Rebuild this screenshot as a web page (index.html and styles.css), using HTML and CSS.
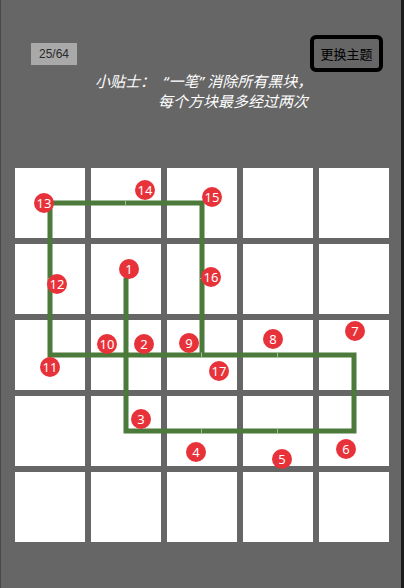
FILE: index.html
```html
<!DOCTYPE html>
<html lang="zh-CN">
<head>
<meta charset="utf-8">
<title>一笔</title>
<link rel="stylesheet" href="styles.css">
</head>
<body>
<div class="app">
  <div class="header">
    <div class="counter">25/64</div>
    <button class="theme-btn">更换主题</button>
  </div>
  <div class="tip">
    <div class="tip-line first">小贴士：<span class="q open">“</span>一笔<span class="q close">”</span> 消除所有黑块，</div>
    <div class="tip-line second">每个方块最多经过两次</div>
  </div>
  <div class="board">
    <div class="grid">
      <div class="cell"></div><div class="cell"></div><div class="cell"></div><div class="cell"></div><div class="cell"></div>
      <div class="cell"></div><div class="cell"></div><div class="cell"></div><div class="cell"></div><div class="cell"></div>
      <div class="cell"></div><div class="cell"></div><div class="cell"></div><div class="cell"></div><div class="cell"></div>
      <div class="cell"></div><div class="cell"></div><div class="cell"></div><div class="cell"></div><div class="cell"></div>
      <div class="cell"></div><div class="cell"></div><div class="cell"></div><div class="cell"></div><div class="cell"></div>
    </div>
    <svg class="path" width="374" height="374" viewBox="0 0 374 374">
      <polyline points="111,112 111,263 339,263 339,187 35,187 35,35 187,35 187,187" fill="none" stroke="#4b7a3b" stroke-width="5" stroke-linejoin="miter" stroke-linecap="square"/>
      <g stroke="#9fbf92" stroke-width="1">
        <line x1="110.5" y1="32.5" x2="110.5" y2="37.5"/>
        <line x1="32.5" y1="110.5" x2="37.5" y2="110.5"/>
        <line x1="184.5" y1="110.5" x2="189.5" y2="110.5"/>
        <line x1="186.5" y1="184.5" x2="186.5" y2="189.5"/>
        <line x1="262.5" y1="184.5" x2="262.5" y2="189.5"/>
        <line x1="186.5" y1="260.5" x2="186.5" y2="265.5"/>
        <line x1="262.5" y1="260.5" x2="262.5" y2="265.5"/>
      </g>
    </svg>
    <span class="dot" style="left:104px;top:91px">1</span>
    <span class="dot" style="left:119px;top:166px">2</span>
    <span class="dot" style="left:116px;top:241px">3</span>
    <span class="dot" style="left:171px;top:274px">4</span>
    <span class="dot" style="left:257px;top:281px">5</span>
    <span class="dot" style="left:321px;top:271px">6</span>
    <span class="dot" style="left:330px;top:153px">7</span>
    <span class="dot" style="left:248px;top:161px">8</span>
    <span class="dot" style="left:164px;top:165px">9</span>
    <span class="dot" style="left:82px;top:166px">10</span>
    <span class="dot" style="left:25px;top:189px">11</span>
    <span class="dot" style="left:32px;top:106px">12</span>
    <span class="dot" style="left:19px;top:25px">13</span>
    <span class="dot" style="left:120px;top:12px">14</span>
    <span class="dot" style="left:187px;top:19px">15</span>
    <span class="dot" style="left:186px;top:99px">16</span>
    <span class="dot" style="left:194px;top:193px">17</span>
  </div>
</div>
</body>
</html>
```

FILE: styles.css
```css
html, body {
  margin: 0;
  padding: 0;
  background: #1c1c1c;
}
.app {
  box-sizing: border-box;
  width: 404px;
  height: 588px;
  background: #666666;
  border-left: 1px solid #484848;
  border-right: 3px solid #1c1c1c;
  padding-top: 35px;
  overflow: hidden;
  font-family: "Noto Sans", "Noto Sans CJK SC", sans-serif;
}
.header {
  display: flex;
  justify-content: space-between;
  align-items: flex-start;
  padding: 0 18px 0 30px;
}
.counter {
  margin-top: 8px;
  width: 46px;
  height: 22px;
  background: #a9a9a9;
  color: #2a2a2a;
  font-family: "Liberation Sans", Arial, sans-serif;
  font-size: 12px;
  line-height: 22px;
  text-align: center;
}
.theme-btn {
  box-sizing: border-box;
  width: 73px;
  height: 37px;
  margin: 0;
  padding: 0;
  background: #666666;
  border: 4px solid #000;
  border-radius: 6px;
  color: #000;
  font-family: "Noto Sans CJK SC", sans-serif;
  font-size: 13px;
  line-height: 28px;
  text-align: center;
}
.tip {
  margin-top: -1px;
  color: #ffffff;
  font-family: "Noto Sans CJK SC", sans-serif;
  font-size: 15px;
  line-height: 20px;
  font-style: italic;
  white-space: nowrap;
}
.tip .q {
  font-family: "Noto Sans", sans-serif;
}
.tip .q.open {
  margin-left: 8px;
}
.tip-line.first {
  padding-left: 94px;
}
.tip-line.second {
  padding-left: 157px;
}
.board {
  position: relative;
  width: 374px;
  height: 374px;
  margin: 57px 0 0 14px;
}
.grid {
  display: grid;
  grid-template-columns: repeat(5, 70px);
  grid-auto-rows: 70px;
  gap: 6px;
}
.cell {
  background: #ffffff;
}
.path {
  position: absolute;
  left: 0;
  top: 0;
}
.dot {
  position: absolute;
  width: 20px;
  height: 20px;
  border-radius: 50%;
  background: #e8323a;
  color: #ffffff;
  font-family: "Noto Sans", sans-serif;
  font-size: 13px;
  line-height: 20px;
  text-align: center;
}
```
